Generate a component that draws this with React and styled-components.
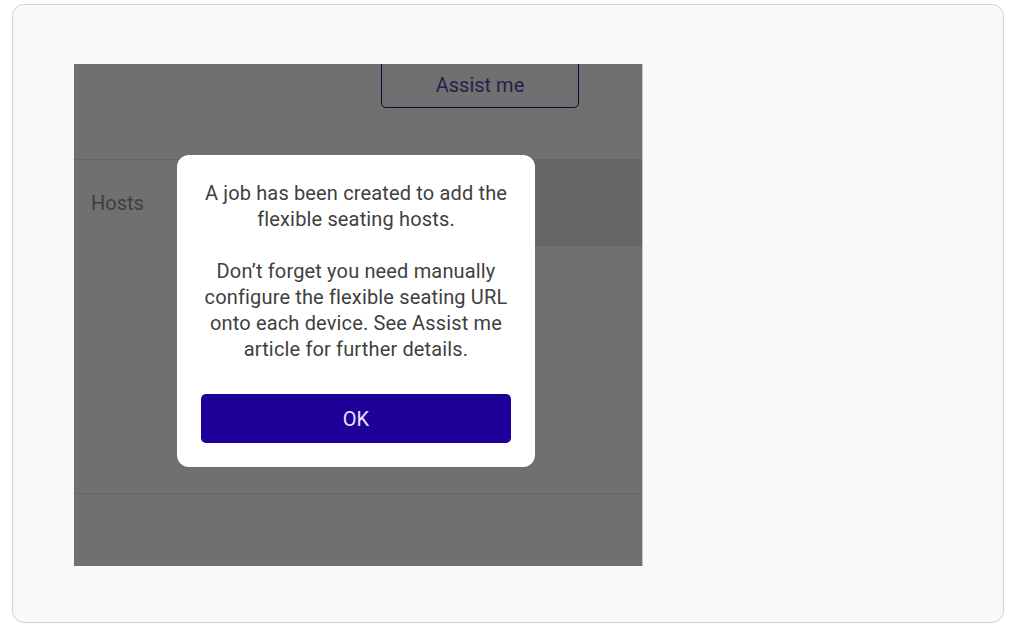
import React from "react";
import styled, { createGlobalStyle } from "styled-components";

const GlobalStyle = createGlobalStyle`
  html, body {
    margin: 0;
    padding: 0;
    background: #ffffff;
    font-family: Roboto, "Noto Sans", Arial, sans-serif;
  }
`;

const Card = styled.div`
  box-sizing: border-box;
  margin: 4px 10px 0 12px;
  width: 992px;
  height: 619px;
  border: 1px solid #d2d2d2;
  border-radius: 12px;
  background: #f9f9f9;
  padding: 59px 0 0 61px;
`;

const Frame = styled.div`
  position: relative;
  width: 568px;
  height: 502px;
  overflow: hidden;
  background: #ffffff;
  display: flex;
  flex-direction: column;
  border-right: 1px solid #c4c4c4;
`;

const Header = styled.div`
  height: 95px;
  flex-shrink: 0;
  display: flex;
  align-items: flex-start;
  padding-left: 307px;
  border-bottom: 1px solid #e6e6e6;
`;

const OutlineButton = styled.button`
  margin-top: -4px;
  width: 198px;
  height: 48px;
  border: 1.5px solid #2a1a8a;
  border-radius: 5px;
  background: #ffffff;
  color: #5a4ca6;
  font-family: Roboto, Arial, sans-serif;
  font-size: 20px;
  padding-top: 2px;
`;

const Row = styled.div`
  height: 86px;
  flex-shrink: 0;
  display: grid;
  grid-template-columns: 226px 1fr;
`;

const Label = styled.div`
  display: flex;
  align-items: center;
  padding-left: 17px;
  font-size: 20px;
  color: #909090;
`;

const Field = styled.div`
  background: #e9e9e9;
`;

const Body = styled.div`
  flex: 1;
  border-bottom: 1px solid #e6e6e6;
`;

const Footer = styled.div`
  height: 72px;
  flex-shrink: 0;
`;

const Overlay = styled.div`
  position: absolute;
  inset: 0;
  background: rgba(0, 0, 0, 0.56);
`;

const Dialog = styled.div`
  position: absolute;
  left: 103px;
  top: 91px;
  box-sizing: border-box;
  width: 358px;
  height: 312px;
  background: #ffffff;
  border-radius: 12px;
  padding: 25px 16px 24px;
  display: flex;
  flex-direction: column;
`;

const Message = styled.p`
  margin: 0;
  text-align: center;
  font-size: 20px;
  line-height: 26px;
  letter-spacing: 0.15px;
  color: #3f3f3f;
  white-space: nowrap;
`;

const PrimaryButton = styled.button`
  margin: 32px 8px 0;
  height: 49px;
  border: none;
  border-radius: 5px;
  background: #1f0099;
  color: #e6e3ff;
  font-family: Roboto, Arial, sans-serif;
  font-size: 20px;
`;

export default function App() {
  return (
    <>
      <GlobalStyle />
      <Card>
        <Frame>
          <Header>
            <OutlineButton>Assist me</OutlineButton>
          </Header>
          <Row>
            <Label>Hosts</Label>
            <Field />
          </Row>
          <Body />
          <Footer />
          <Overlay />
          <Dialog>
            <Message>
              A job has been created to add the
              <br />
              flexible seating hosts.
              <br />
              <br />
              Don’t forget you need manually
              <br />
              configure the flexible seating URL
              <br />
              onto each device. See Assist me
              <br />
              article for further details.
            </Message>
            <PrimaryButton>OK</PrimaryButton>
          </Dialog>
        </Frame>
      </Card>
    </>
  );
}
